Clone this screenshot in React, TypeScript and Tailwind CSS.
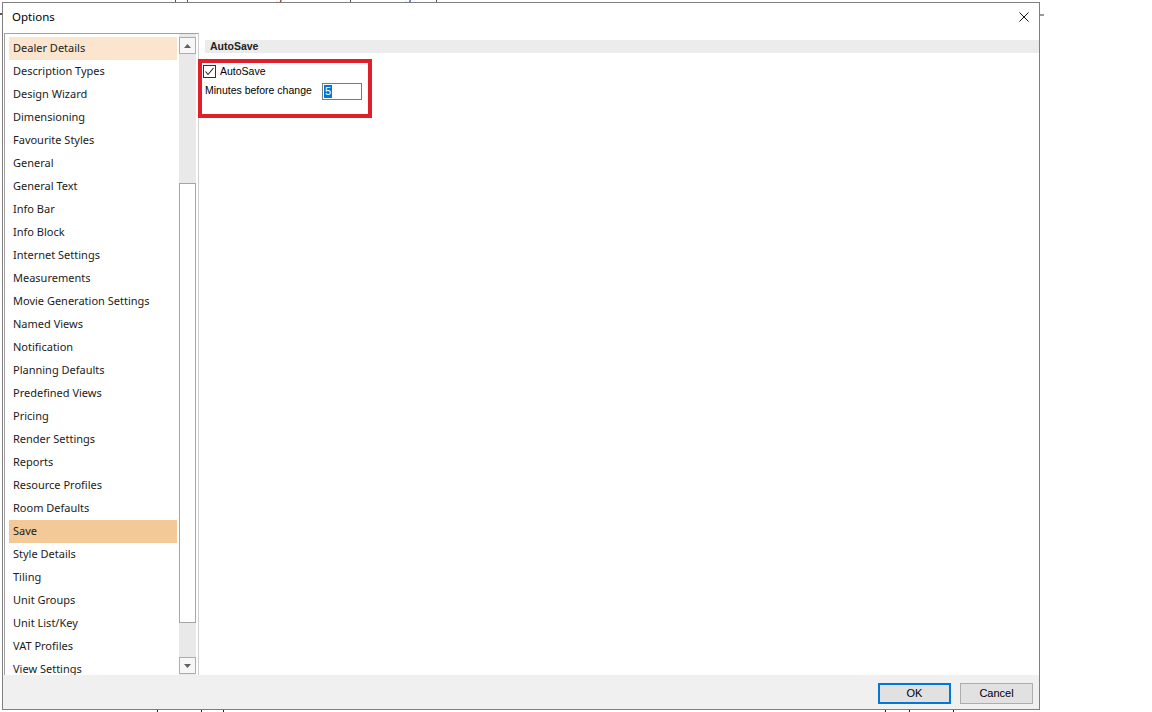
import React from "react";

const items = [
  "Dealer Details",
  "Description Types",
  "Design Wizard",
  "Dimensioning",
  "Favourite Styles",
  "General",
  "General Text",
  "Info Bar",
  "Info Block",
  "Internet Settings",
  "Measurements",
  "Movie Generation Settings",
  "Named Views",
  "Notification",
  "Planning Defaults",
  "Predefined Views",
  "Pricing",
  "Render Settings",
  "Reports",
  "Resource Profiles",
  "Room Defaults",
  "Save",
  "Style Details",
  "Tiling",
  "Unit Groups",
  "Unit List/Key",
  "VAT Profiles",
  "View Settings",
];

function Arrow({ down }: { down?: boolean }) {
  return (
    <svg width="7" height="4" viewBox="0 0 7 4">
      <polygon
        points={down ? "0,0 7,0 3.5,4" : "0,4 7,4 3.5,0"}
        fill="#606060"
      />
    </svg>
  );
}

function Scrollbar() {
  return (
    <div className="ml-[2px] flex w-[17px] flex-col bg-[#e9e9e9] pt-[3px] pb-[1px]">
      <div className="flex h-[17px] w-[17px] items-center justify-center border border-[#adadad] bg-[#f7f7f7]">
        <Arrow />
      </div>
      <div className="h-[129px]" />
      <div className="h-[440px] w-[17px] border border-[#a6a6a6] bg-white" />
      <div className="h-[34px]" />
      <div className="flex h-[17px] w-[17px] items-center justify-center border border-[#adadad] bg-[#f7f7f7]">
        <Arrow down />
      </div>
    </div>
  );
}

function OptionList() {
  return (
    <div className="ml-[1px] flex h-[642px] w-[195px] border-t border-l border-r border-t-[#a0a0a0] border-l-[#a0a0a0] border-r-[#cfcfcf] bg-white">
      <div className="w-[172px] overflow-hidden pt-[3px] pl-[4px]">
        {items.map((it) => (
          <div
            key={it}
            className={
              "flex h-[23px] w-[168px] items-center pl-[4px] text-[11px] text-[#1b1b1b] " +
              (it === "Save"
                ? "bg-[#f3c997]"
                : it === "Dealer Details"
                ? "bg-[#fce5ce]"
                : "")
            }
          >
            {it}
          </div>
        ))}
      </div>
      <Scrollbar />
    </div>
  );
}

function Checkbox() {
  return (
    <div className="flex h-[13px] w-[13px] items-center justify-center border border-[#333] bg-white">
      <svg width="11" height="11" viewBox="0 0 11 11">
        <polyline
          points="1.5,5.5 4,8.5 9.5,2"
          fill="none"
          stroke="#222"
          strokeWidth="1.1"
        />
      </svg>
    </div>
  );
}

function AutoSavePanel() {
  return (
    <div className="relative h-[642px] flex-1 bg-white font-['Liberation_Sans',Arial,sans-serif] text-[10.5px] text-black">
      <div className="mt-[7px] ml-[6px] h-[13px] bg-[#ececec] pl-[5px] text-[10.5px] font-bold leading-[13px] text-[#222]">
        AutoSave
      </div>
      <div className="mt-[12px] ml-[4px] flex items-center gap-[4px]">
        <Checkbox />
        <span className="leading-[13px]">AutoSave</span>
      </div>
      <div className="mt-[5px] ml-[6px] flex items-center">
        <span className="w-[117px] pb-[2px] leading-[13px]">Minutes before change</span>
        <div className="flex h-[17px] w-[40px] items-center border border-[#7a7a7a] bg-white pl-[1px]">
          <span className="bg-[#0078d7] px-[1px] text-[11px] leading-[13px] text-white">5</span>
        </div>
      </div>
      {/* red annotation frame drawn over the controls */}
      <div className="absolute top-[26px] left-[-1px] h-[59px] w-[174px] border-4 border-[#e01f2a]" />
    </div>
  );
}

function Dialog() {
  return (
    <div className="flex h-[708px] w-[1038px] flex-col border border-[#7f7f7f] bg-white font-['Noto_Sans','Open_Sans',sans-serif]">
      <div className="flex h-[30px] items-center justify-between pr-[10px] pb-[2px] pl-[9px]">
        <span className="text-[11.5px] text-black">Options</span>
        <svg width="10" height="10" viewBox="0 0 10 10">
          <path d="M0.5 0.5 L9.5 9.5 M9.5 0.5 L0.5 9.5" stroke="#111" strokeWidth="1" />
        </svg>
      </div>
      <div className="flex">
        <OptionList />
        <AutoSavePanel />
      </div>
      <div className="flex h-[34px] justify-end gap-[9px] bg-[#f0f0f0] pt-[8px] pr-[6px] font-['Liberation_Sans',Arial,sans-serif] text-[11px] text-black">
        <button className="flex h-[21px] w-[73px] items-center justify-center border-2 border-[#0078d7] bg-[#e1e1e1]">
          OK
        </button>
        <button className="flex h-[21px] w-[73px] items-center justify-center border border-[#adadad] bg-[#e1e1e1]">
          Cancel
        </button>
      </div>
    </div>
  );
}

export default function App() {
  const tabs = [
    { w: "w-[168px]", label: "Commercial" },
    { w: "w-[12px]", label: "" },
    { w: "w-[163px]", label: "Catalogue" },
    { w: "w-[86px]", label: "Editing" },
  ];
  return (
    <div className="flex h-[712px] w-[1152px] flex-col overflow-hidden bg-white font-['Noto_Sans',sans-serif]">
      {/* app tabs behind the dialog, only their bottom edge shows */}
      <div className="flex h-[2px] overflow-hidden">
        <div className="w-[8px]" />
        {tabs.map((t, i) => (
          <div
            key={i}
            className={t.w + " border-r border-[#555] text-center text-[11px] leading-[13px] text-[#222]"}
          >
            <div className="-mt-[11px]">{t.label}</div>
          </div>
        ))}
      </div>
      <div className="flex h-[708px]">
        <div className="w-[2px]">
          <div className="mt-[11px] h-[2px] bg-[#555]" />
        </div>
        <Dialog />
        <div className="w-[4px]">
          <div className="mt-[12px] h-[2px] bg-[#9a9a9a]" />
        </div>
      </div>
      <div className="flex h-[2px]">
        <div className="w-[157px]" />
        <div className="w-px bg-[#222]" />
        <div className="w-[43px]" />
        <div className="w-px bg-[#222]" />
        <div className="w-[21px]" />
        <div className="w-px bg-[#222]" />
        <div className="w-[661px]" />
        <div className="w-px bg-[#222]" />
        <div className="w-[23px]" />
        <div className="w-px bg-[#222]" />
        <div className="w-[43px]" />
        <div className="w-px bg-[#222]" />
      </div>
    </div>
  );
}
